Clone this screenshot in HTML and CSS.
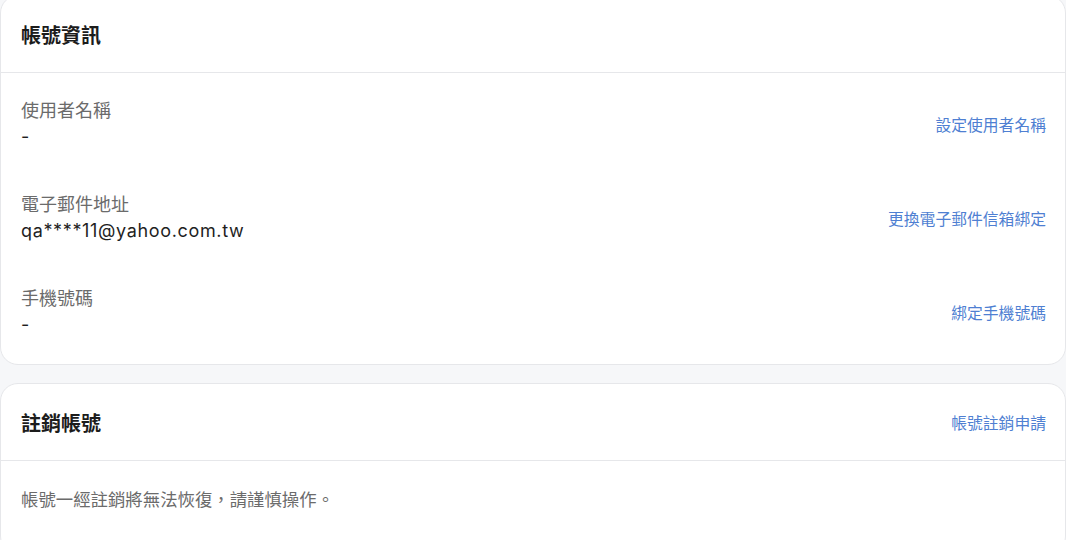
FILE: index.html
```html
<!DOCTYPE html>
<html lang="zh-Hant">
<head>
  <meta charset="UTF-8">
  <title>帳號設定</title>
  <link rel="stylesheet" href="styles.css">
</head>
<body>
  <section class="card card-account">
    <div class="card-head">
      <h2>帳號資訊</h2>
    </div>
    <div class="card-rows">
      <div class="info-row">
        <div class="info-text">
          <div class="info-label">使用者名稱</div>
          <div class="info-value">-</div>
        </div>
        <a href="#" class="info-link">設定使用者名稱</a>
      </div>
      <div class="info-row">
        <div class="info-text">
          <div class="info-label">電子郵件地址</div>
          <div class="info-value">qa****11@yahoo.com.tw</div>
        </div>
        <a href="#" class="info-link">更換電子郵件信箱綁定</a>
      </div>
      <div class="info-row">
        <div class="info-text">
          <div class="info-label">手機號碼</div>
          <div class="info-value">-</div>
        </div>
        <a href="#" class="info-link">綁定手機號碼</a>
      </div>
    </div>
  </section>

  <section class="card">
    <div class="card-head">
      <h2>註銷帳號</h2>
      <a href="#" class="info-link">帳號註銷申請</a>
    </div>
    <p class="card-note">帳號一經註銷將無法恢復，請謹慎操作。</p>
  </section>
</body>
</html>
```

FILE: styles.css
```css
body {
  margin: 0;
  background: #f6f7f9;
  font-family: Inter, "Noto Sans CJK TC", sans-serif;
  color: #222;
}
.card {
  background: #fff;
  border: 1px solid #e6e7ea;
  border-radius: 18px;
  margin-bottom: 18px;
}
.card-account { margin-top: -5px; }
.card-head {
  height: 76px;
  padding: 0 19px 0 20px;
  display: flex;
  align-items: center;
  justify-content: space-between;
  border-bottom: 1px solid #e6e7ea;
}
.card-head h2 {
  margin: 0;
  font-size: 20px;
  font-weight: 700;
  color: #1c1c1c;
}
.card-rows { padding: 4px 19px 5px 20px; }
.info-row {
  height: 94px;
  display: flex;
  align-items: center;
  justify-content: space-between;
}
.info-label {
  font-size: 18px;
  line-height: 26px;
  color: #6b6b6b;
}
.info-value {
  font-size: 18px;
  line-height: 26px;
  letter-spacing: 0.65px;
  color: #1f1f1f;
}
.info-link {
  font-size: 15.8px;
  color: #4f7fd2;
  text-decoration: none;
}
.card-note {
  margin: 0;
  padding: 26px 20px 40px;
  font-size: 17.4px;
  line-height: 26px;
  color: #6b6b6b;
}
```
